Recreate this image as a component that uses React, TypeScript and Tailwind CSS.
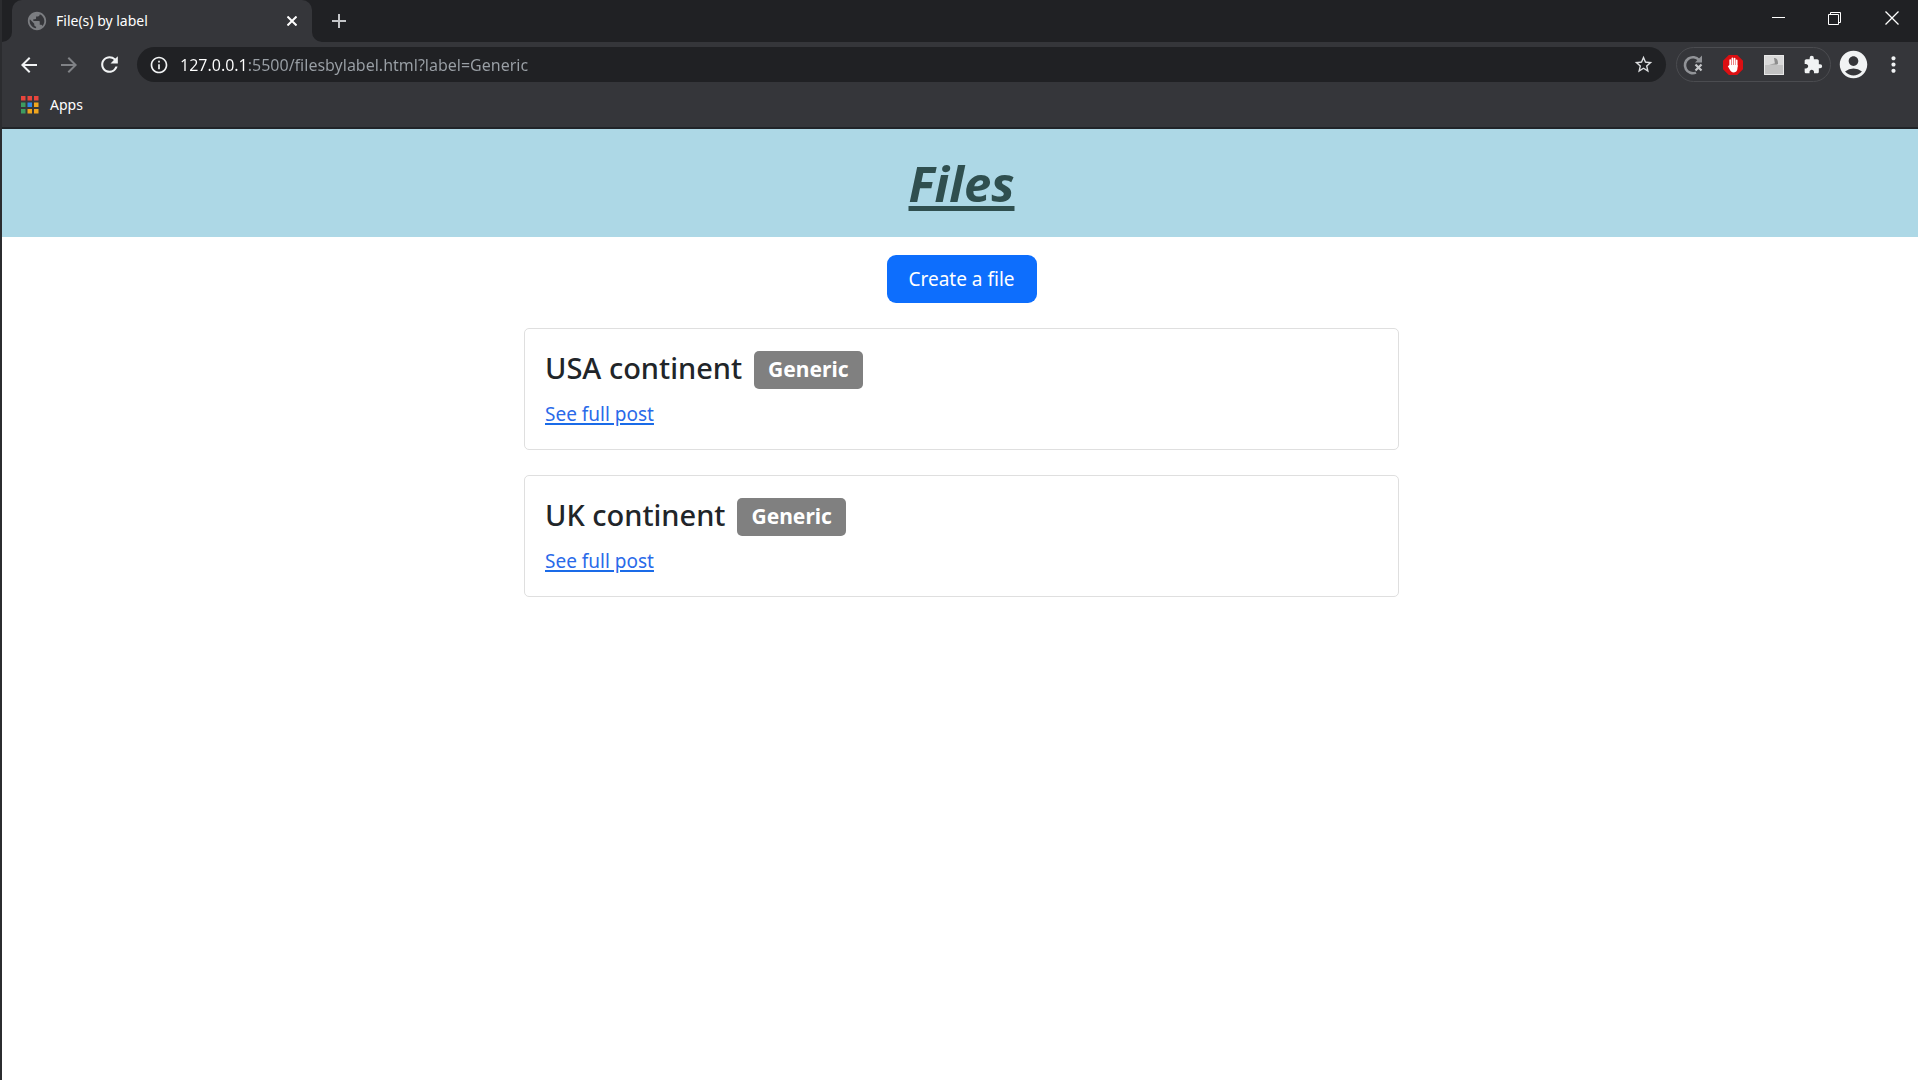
import React from 'react';
import {
  MdAccountCircle,
  MdAdd,
  MdArrowBack,
  MdArrowForward,
  MdExtension,
  MdInfoOutline,
  MdMoreVert,
  MdPublic,
  MdRefresh,
  MdStarOutline,
} from 'react-icons/md';

const files = [
  { title: 'USA continent', label: 'Generic' },
  { title: 'UK continent', label: 'Generic' },
];

const appDots = [
  '#e8453c', '#e8453c', '#e8453c',
  '#3d9b60', '#2f86e6', '#f0a51e',
  '#3d9b60', '#f0a51e', '#f0a51e',
];

function AppsIcon() {
  return (
    <svg width="18" height="18" viewBox="0 0 18 18" aria-hidden="true">
      {appDots.map((color, i) => (
        <rect key={i} x={(i % 3) * 6.5} y={Math.floor(i / 3) * 6.5} width="4.5" height="4.5" fill={color} />
      ))}
    </svg>
  );
}

function TabFoot({ flip = false }: { flip?: boolean }) {
  return (
    <svg width="10" height="10" viewBox="0 0 10 10" className={flip ? 'self-end -scale-x-100' : 'self-end'} aria-hidden="true">
      <path d="M10 0v10H0a10 10 0 0 0 10-10z" fill="#35363a" />
    </svg>
  );
}

function ReloadBlockedIcon() {
  return (
    <svg width="22" height="22" viewBox="0 0 22 22" fill="none" aria-hidden="true">
      <path d="M17 6A8 8 0 1 0 14 18.600" stroke="#919397" strokeWidth="2.600" />
      <path d="M20 1.500v7h-7z" fill="#919397" />
      <path d="M13.500 10.500l6 6M19.500 10.500l-6 6" stroke="#c6c8ca" strokeWidth="2.200" />
    </svg>
  );
}

function BlockerIcon() {
  return (
    <svg width="22" height="22" viewBox="0 0 22 22" aria-hidden="true">
      <path d="M6.800 1h8.400L21 6.800v8.400L15.200 21H6.800L1 15.200V6.800z" fill="#dc0f12" />
      <g stroke="#fff" strokeWidth="1.700" strokeLinecap="round" fill="none">
        <path d="M8.200 6v6M10.400 4.300v7M12.600 4.600v7M14.700 6.400v6" />
      </g>
      <path d="M7.400 11h8.100v2.800c0 3-1.400 4.600-3.600 4.600-2.400 0-3.300-1.300-4.500-3.500L5.800 12.200l1-.8z" fill="#fff" />
    </svg>
  );
}

function PictureIcon() {
  return (
    <svg width="22" height="22" viewBox="0 0 22 22" aria-hidden="true">
      <path d="M1 1h20v20H1z" fill="#d9d9d9" />
      <path d="M2 11h18v9H2z" fill="#c2c2c2" />
      <path d="M6 11l6-2 3 2z" fill="#aaa" />
      <path d="M11 4c3 0 4 2 4 6h-3z" fill="#8d8d8d" />
      <path d="M1.500 1.500h19v19h-19z" fill="none" stroke="#e8e8e8" />
    </svg>
  );
}

function TabStrip() {
  return (
    <div className="flex h-[42px] items-stretch bg-[#202124]">
      <TabFoot />
      <div className="flex w-[300px] items-center rounded-t-[10px] bg-[#35363a] pr-2 pl-[14px]">
        <MdPublic size={22} color="#7b7d81" aria-hidden="true" />
        <span className="ml-2 flex-1 text-[14px] leading-5 text-white">File(s) by label</span>
        <button aria-label="Close tab" className="flex size-6 items-center justify-center text-white">
          <svg width="10" height="10" viewBox="0 0 10 10"><path d="M.5.500l9 9M9.500.500l-9 9" stroke="currentColor" strokeWidth="2" /></svg>
        </button>
      </div>
      <TabFoot flip />
      <button aria-label="New tab" className="flex w-[34px] items-center justify-center text-[#c3c5c8]">
        <MdAdd size={24} />
      </button>
      <div className="ml-auto flex h-9 text-white">
        <button aria-label="Minimize" className="flex w-14 items-center justify-center">
          <svg width="13" height="13" viewBox="0 0 13 13"><path d="M0 5.500h13" stroke="currentColor" /></svg>
        </button>
        <button aria-label="Restore" className="flex w-14 items-center justify-center">
          <svg width="13" height="13" viewBox="0 0 13 13" fill="none" stroke="currentColor">
            <path d="M.5 2.500h10v10H.5zM2.500 2.500v-2h10v10h-2" />
          </svg>
        </button>
        <button aria-label="Close window" className="flex w-14 items-center justify-center pl-[3px]">
          <svg width="14" height="14" viewBox="0 0 14 14"><path d="M.5.500l13 13M13.500.500l-13 13" stroke="currentColor" strokeWidth="1.300" /></svg>
        </button>
      </div>
    </div>
  );
}

function Toolbar() {
  return (
    <div className="flex h-[45px] items-center pr-3 pl-[7px]">
      <button aria-label="Back" className="flex w-10 justify-center text-[#f1f3f4]"><MdArrowBack size={24} /></button>
      <button aria-label="Forward" className="flex w-10 justify-center text-[#808286]"><MdArrowForward size={24} /></button>
      <button aria-label="Reload" className="flex w-10 justify-center text-[#f1f3f4]"><MdRefresh size={25} /></button>
      <div className="ml-2 flex h-[35px] flex-1 items-center rounded-full bg-[#202124] pr-3 pl-3">
        <MdInfoOutline size={20} color="#f1f3f4" aria-hidden="true" />
        <input
          aria-label="Address"
          readOnly
          value="127.0.0.1:5500/filesbylabel.html?label=Generic"
          className="ml-[11px] h-full min-w-0 flex-1 bg-[linear-gradient(to_right,#ffffff_67px,#9aa0a6_67px)] bg-clip-text text-[16px] text-transparent outline-none"
        />
        <button aria-label="Bookmark this page" className="text-[#dcdee0]"><MdStarOutline size={21} /></button>
      </div>
      <div className="ml-[10px] flex h-[35px] w-[155px] items-center justify-between rounded-full border border-[#4b4c50] pr-[7px] pl-[5px]">
        <button aria-label="Page reload extension"><ReloadBlockedIcon /></button>
        <button aria-label="Ad blocker"><BlockerIcon /></button>
        <button aria-label="Picture extension"><PictureIcon /></button>
        <button aria-label="Extensions" className="text-[#f1f3f4]"><MdExtension size={20} /></button>
      </div>
      <button aria-label="Profile" className="ml-[6px] text-[#f1f3f4]"><MdAccountCircle size={33} /></button>
      <button aria-label="Menu" className="ml-[11px] text-[#f1f3f4]"><MdMoreVert size={25} /></button>
    </div>
  );
}

function BrowserChrome() {
  return (
    <div className="border-b-2 border-[#212428] bg-[#35363a]">
      <TabStrip />
      <Toolbar />
      <nav aria-label="Bookmarks" className="flex h-10 items-start px-[19px] pt-[7px]">
        <a href="#apps" className="flex items-center gap-[11px] text-[14px] leading-[22px] text-white">
          <AppsIcon />
          Apps
        </a>
      </nav>
    </div>
  );
}

function FileCard({ title, label }: { title: string; label: string }) {
  return (
    <article className="rounded-[5px] border border-[#dfdfdf] px-5 py-[19px]">
      <div className="flex h-10 items-center">
        <h2 className="text-[29px] leading-10 font-medium text-[#212529]">{title}</h2>
        <span className="mt-[3px] ml-3 flex h-[38px] items-center rounded-[5px] bg-[#808080] px-[14px] text-[21px] font-bold text-white">
          {label}
        </span>
      </div>
      <a href="#post" className="mt-[10px] block w-fit text-[19px] leading-8 text-[#2a6ae9] underline decoration-[#1a6be8] decoration-2 underline-offset-2">
        See full post
      </a>
    </article>
  );
}

export default function App() {
  return (
    <div className="min-h-screen border-l-2 border-[#2b2c2f] bg-white font-['Noto_Sans',sans-serif]">
      <BrowserChrome />
      <header className="flex h-[108px] items-center justify-center bg-[#add8e6] pl-[3px]">
        <h1 className="text-[49px] leading-[60px] font-bold text-[#2f4f4f] italic underline decoration-[5px] underline-offset-4">
          Files
        </h1>
      </header>
      <main className="flex flex-col items-center pt-[18px] pl-[3px]">
        <button className="h-12 w-[150px] rounded-[9px] bg-[#0d6efd] text-[19px] text-white">Create a file</button>
        <section className="mt-[25px] flex w-full max-w-[875px] flex-col gap-[25px]">
          {files.map((file) => (
            <FileCard key={file.title} {...file} />
          ))}
        </section>
      </main>
    </div>
  );
}
